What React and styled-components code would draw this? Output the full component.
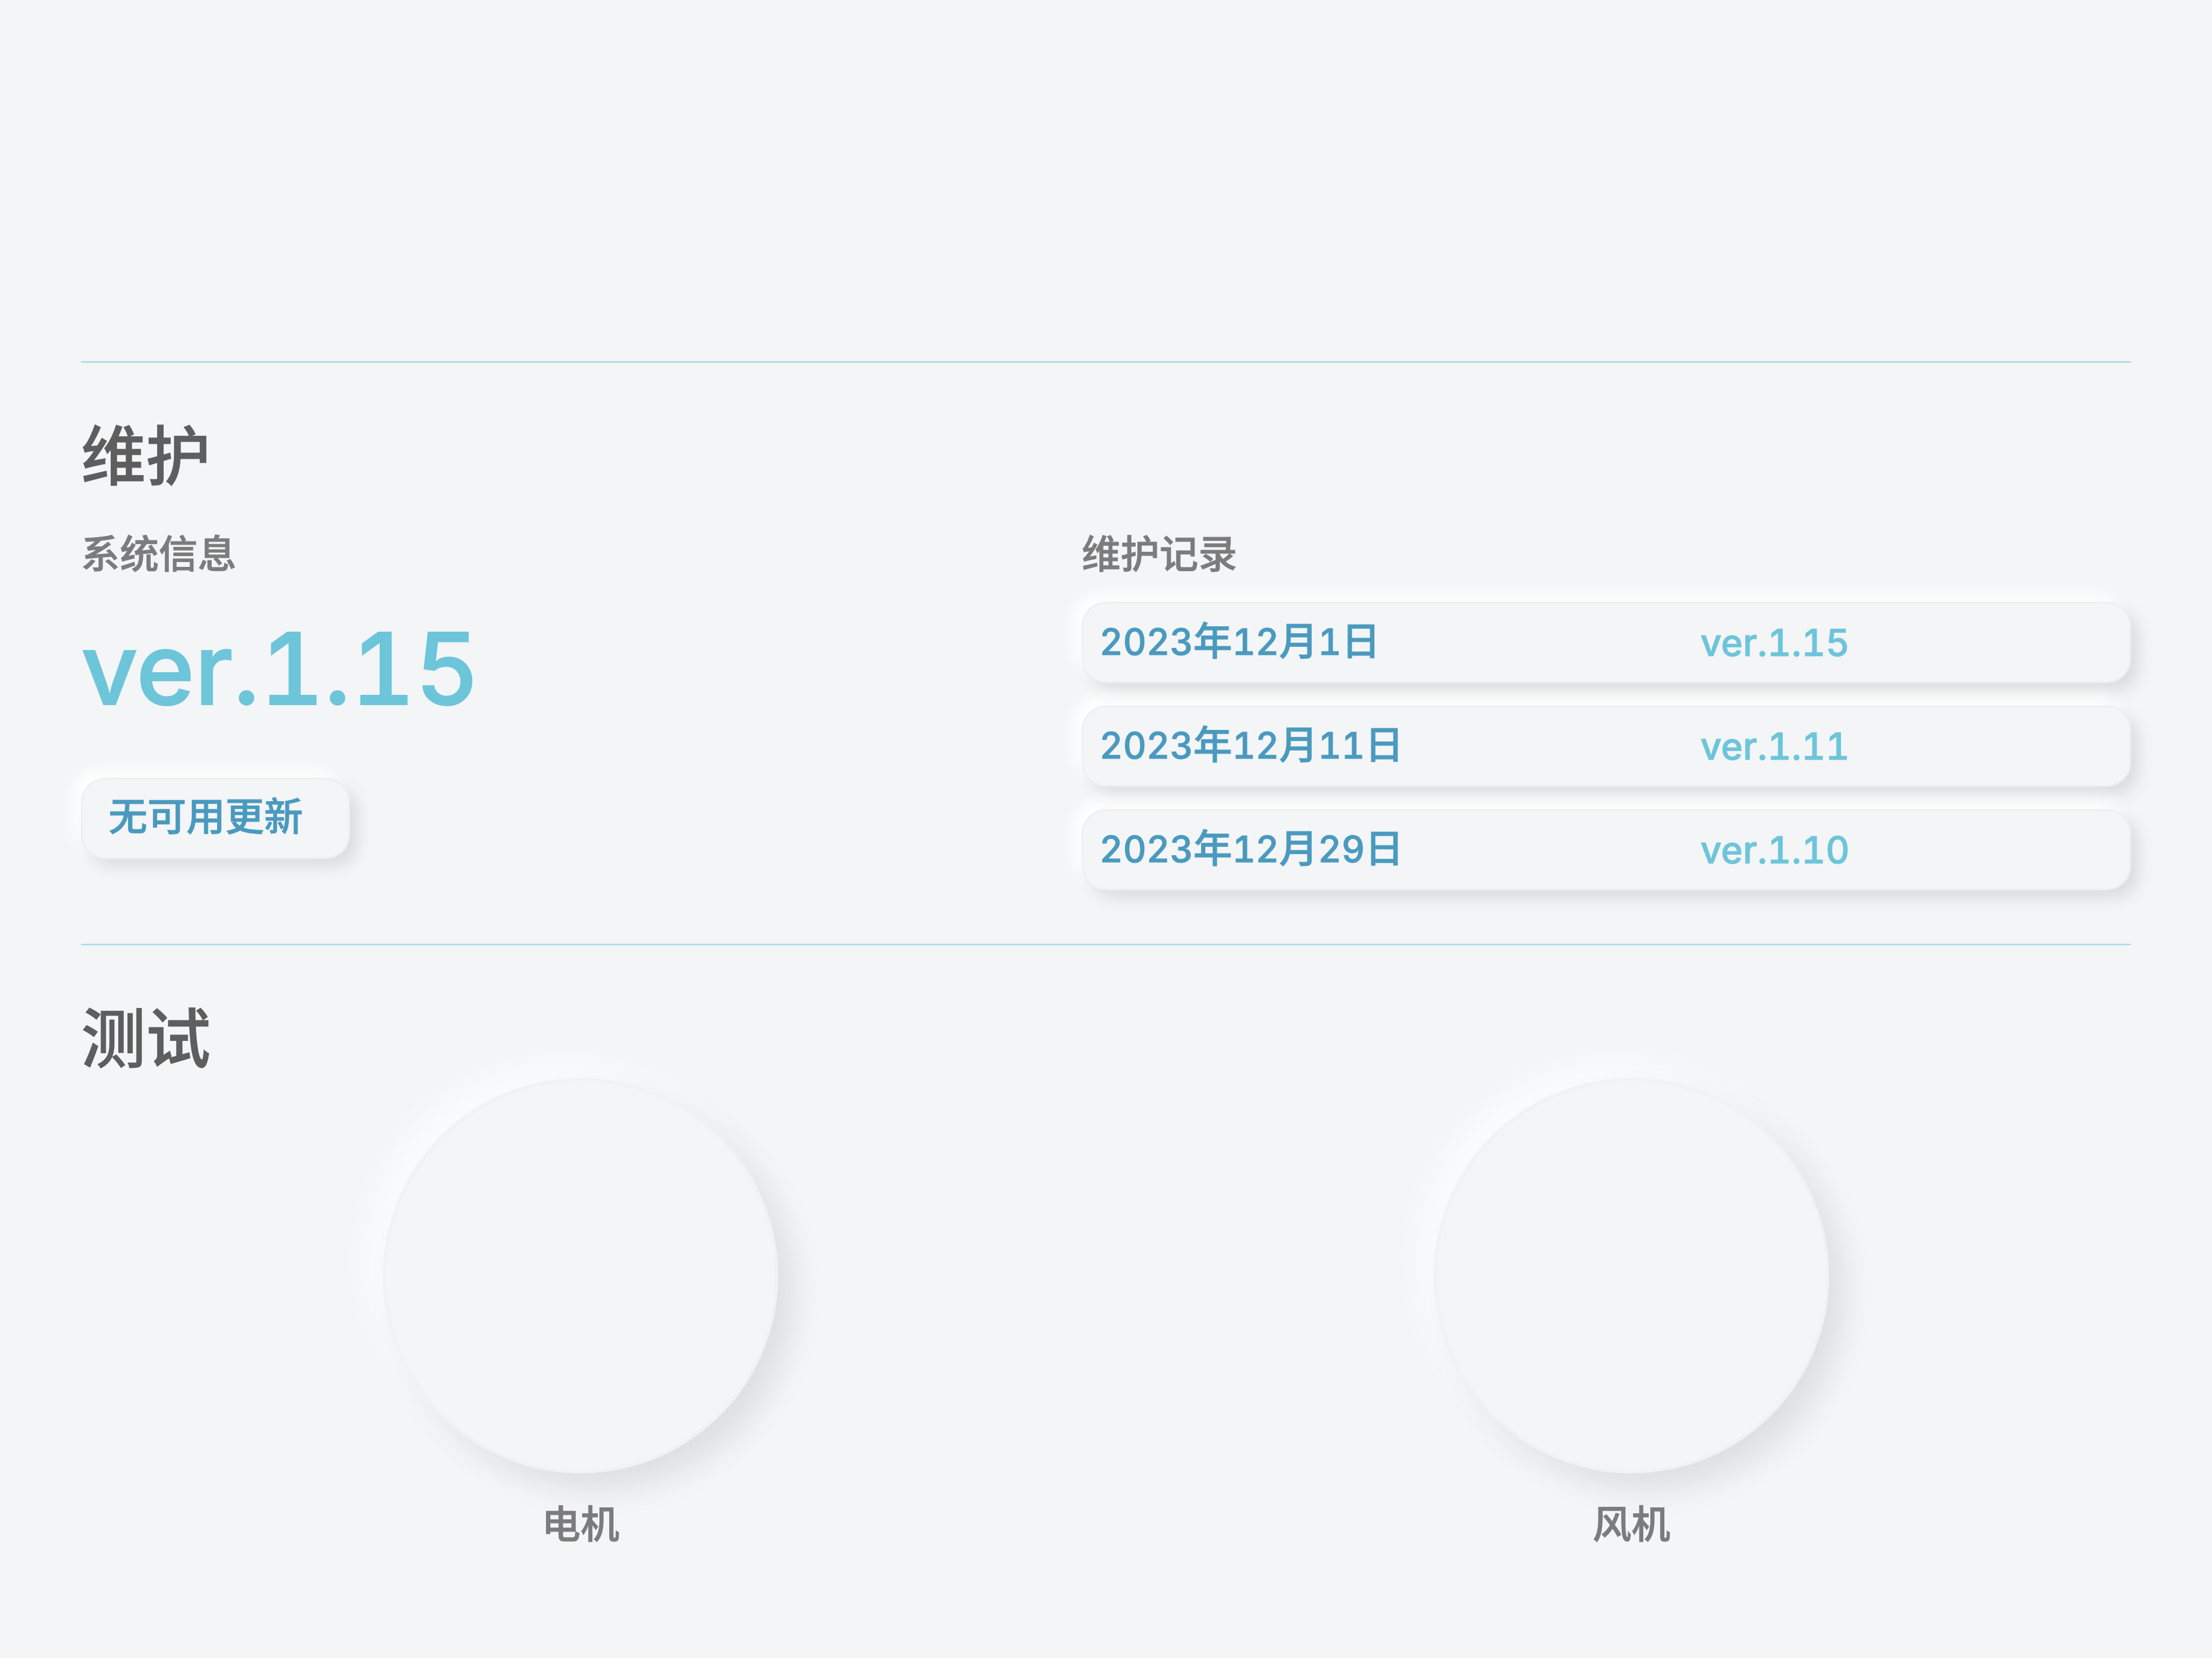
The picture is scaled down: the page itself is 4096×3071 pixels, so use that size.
import React from "react";
import styled, { createGlobalStyle } from "styled-components";

const color = {
  page: "#f4f5f7",
  rule: "#b0dde9",
  heading: "#5e5e5e",
  label: "#7c7c7c",
  accent: "#6dc5da",
  link: "#4a9abf",
  edge: "#eeeff1",
  softEdge: "#f1f2f4",
};

const GlobalStyle = createGlobalStyle`
  *, *::before, *::after { box-sizing: border-box; }
  body {
    margin: 0;
    background: ${color.page};
    font-family: Inter, "Noto Sans CJK SC", sans-serif;
    font-weight: 500;
    font-variant-numeric: tabular-nums;
    -webkit-text-stroke: 1px currentColor;
  }
`;

const Page = styled.main`
  min-height: 100vh;
  padding: 669px 150px 150px;
  background: ${color.page};
`;

const Section = styled.section`
  border-top: 3px solid ${color.rule};
  padding: 102px 0 ${(p) => p.$bottom || 0}px;
`;

const Heading = styled.h2`
  margin: 0;
  font-size: 120px;
  line-height: 144px;
  font-weight: 500;
  color: ${color.heading};
`;

const Columns = styled.div`
  display: grid;
  grid-template-columns: 618fr 648fr;
  margin-top: 60px;
`;

const Label = styled.h3`
  margin: 0;
  font-size: 72px;
  line-height: 96px;
  font-weight: 500;
  color: ${color.label};
`;

const Version = styled.p`
  margin: 68px 0 107px;
  font-size: 184px;
  line-height: 192px;
  -webkit-text-stroke-width: 2px;
  color: ${color.accent};
`;

const raised = `
  background: ${color.page};
  border: 3px solid ${color.edge};
  border-radius: 45px;
  box-shadow: 15px 15px 30px rgba(0, 0, 0, 0.1), -15px -15px 30px #fff;
`;

const UpdateButton = styled.button`
  ${raised}
  display: block;
  height: 150px;
  padding: 0 84px 9px 48px;
  font: inherit;
  font-size: 72px;
  line-height: 96px;
  color: ${color.link};
`;

const RecordList = styled.ul`
  display: flex;
  flex-direction: column;
  gap: 42px;
  margin: 41px 0 0;
  padding: 0;
  list-style: none;
`;

const Record = styled.li`
  ${raised}
  display: grid;
  grid-template-columns: 1113fr 765fr;
  align-items: center;
  height: 150px;
  padding: 0 30px;
  line-height: 96px;
`;

const RecordDate = styled.time`
  padding-bottom: 4px;
  font-size: 67px;
  color: ${color.link};
`;

const Unit = styled.span`
  font-size: 72px;
`;

const RecordVersion = styled.span`
  font-size: 69px;
  color: ${color.accent};
`;

const Tests = styled.div`
  display: grid;
  grid-template-columns: 1fr 1fr;
  column-gap: 96px;
`;

const Test = styled.div`
  display: flex;
  flex-direction: column;
  align-items: center;
  gap: 46px;
`;

const RoundButton = styled.button`
  width: 732px;
  height: 732px;
  padding: 0;
  border: 6px solid ${color.softEdge};
  border-radius: 50%;
  background: ${color.page};
  box-shadow: 30px 30px 60px rgba(0, 0, 0, 0.09),
    -30px -30px 60px rgba(255, 255, 255, 0.65);
`;

const records = [
  { year: 2023, month: 12, day: 1, version: "ver.1.15" },
  { year: 2023, month: 12, day: 11, version: "ver.1.11" },
  { year: 2023, month: 12, day: 29, version: "ver.1.10" },
];

const tests = [
  { id: "motor", name: "电机" },
  { id: "fan", name: "风机" },
];

const isoDate = ({ year, month, day }) =>
  `${year}-${String(month).padStart(2, "0")}-${String(day).padStart(2, "0")}`;

export default function App() {
  return (
    <>
      <GlobalStyle />
      <Page lang="zh-CN">
        <Section $bottom={99}>
          <Heading>维护</Heading>
          <Columns>
            <div>
              <Label>系统信息</Label>
              <Version>ver.1.15</Version>
              <UpdateButton type="button">无可用更新</UpdateButton>
            </div>
            <div>
              <Label>维护记录</Label>
              <RecordList>
                {records.map((r) => (
                  <Record key={r.version}>
                    <RecordDate dateTime={isoDate(r)}>
                      {r.year}
                      <Unit>年</Unit>
                      {r.month}
                      <Unit>月</Unit>
                      {r.day}
                      <Unit>日</Unit>
                    </RecordDate>
                    <RecordVersion>{r.version}</RecordVersion>
                  </Record>
                ))}
              </RecordList>
            </div>
          </Columns>
        </Section>
        <Section>
          <Heading>测试</Heading>
          <Tests>
            {tests.map((t) => (
              <Test key={t.id}>
                <RoundButton type="button" aria-labelledby={t.id} />
                <Label id={t.id}>{t.name}</Label>
              </Test>
            ))}
          </Tests>
        </Section>
      </Page>
    </>
  );
}
